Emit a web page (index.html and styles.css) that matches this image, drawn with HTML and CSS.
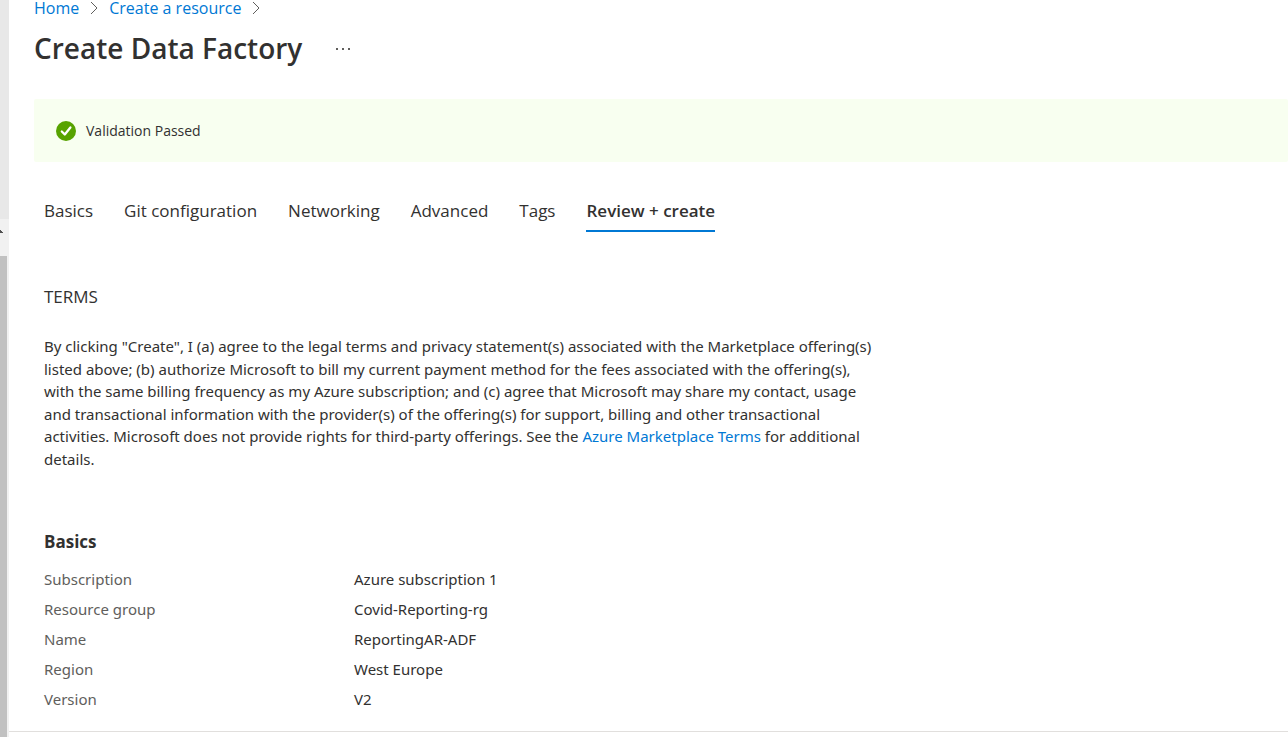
FILE: index.html
```html
<!DOCTYPE html>
<html lang="en">
<head>
<meta charset="utf-8">
<title>Create Data Factory</title>
<link rel="stylesheet" href="styles.css">
</head>
<body>
<div class="shell">
  <aside class="rail" aria-hidden="true">
    <div class="rail-head"></div>
    <div class="rail-arrow"><svg width="3" height="3" viewBox="0 0 3 3"><path d="M0 0h1v1h1v1h1v1H0z" fill="#505050" shape-rendering="crispEdges"/></svg></div>
    <div class="rail-thumb"></div>
  </aside>
  <div class="blade">
    <header class="blade-header">
      <nav class="crumbs" aria-label="Breadcrumb">
        <a href="#">Home</a>
        <svg class="chevron" viewBox="0 0 8 14"><path d="M1 1l6 6-6 6"/></svg>
        <a href="#">Create a resource</a>
        <svg class="chevron" viewBox="0 0 8 14"><path d="M1 1l6 6-6 6"/></svg>
      </nav>
      <div class="title-row">
        <h1>Create Data Factory</h1>
        <button class="more" type="button" aria-label="More actions"><svg width="14" height="2" viewBox="0 0 14 2"><path d="M0 0h2v2H0zM6 0h2v2H6zM12 0h2v2h-2z"/></svg></button>
      </div>
    </header>
    <div class="banner" role="status">
      <svg class="check" viewBox="0 0 20 20"><circle cx="10" cy="10" r="10" fill="#57a300"/><path d="M5.8 10.5l3 3 5.6-7" fill="none" stroke="#fff" stroke-width="2.3" stroke-linecap="round" stroke-linejoin="round"/></svg>
      <span>Validation Passed</span>
    </div>
    <main class="content">
      <div class="tabs" role="tablist">
        <button class="tab" type="button" role="tab">Basics</button>
        <button class="tab" type="button" role="tab">Git configuration</button>
        <button class="tab" type="button" role="tab">Networking</button>
        <button class="tab" type="button" role="tab">Advanced</button>
        <button class="tab" type="button" role="tab">Tags</button>
        <button class="tab active" type="button" role="tab" aria-selected="true">Review + create</button>
      </div>
      <h2 class="terms-title">TERMS</h2>
      <p class="terms">By clicking "Create", I (a) agree to the legal terms and privacy statement(s) associated with the Marketplace offering(s)<br>listed above; (b) authorize Microsoft to bill my current payment method for the fees associated with the offering(s),<br>with the same billing frequency as my Azure subscription; and (c) agree that Microsoft may share my contact, usage<br>and transactional information with the provider(s) of the offering(s) for support, billing and other transactional<br>activities. Microsoft does not provide rights for third-party offerings. See the <a href="#">Azure Marketplace Terms</a> for additional<br>details.</p>
      <h2 class="section-title">Basics</h2>
      <dl class="summary">
        <dt>Subscription</dt><dd>Azure subscription 1</dd>
        <dt>Resource group</dt><dd>Covid-Reporting-rg</dd>
        <dt>Name</dt><dd>ReportingAR-ADF</dd>
        <dt>Region</dt><dd>West Europe</dd>
        <dt>Version</dt><dd>V2</dd>
      </dl>
    </main>
    <footer class="blade-footer"></footer>
  </div>
</div>
</body>
</html>
```
FILE: styles.css
```css
* { box-sizing: border-box; }
body {
  margin: 0;
  background: #fff;
  color: #323130;
  font-family: "Segoe UI", "Open Sans", "Noto Sans", sans-serif;
  font-size: 15px;
}
a { color: #0078d4; text-decoration: none; }
button { border: 0; background: none; padding: 0; color: inherit; font: inherit; }
h1, h2, p, dl, dd { margin: 0; }
.shell { display: flex; min-height: 100vh; }
.rail { flex: none; width: 9px; display: flex; flex-direction: column; background: #f1f1f1; }
.rail-head { height: 219px; background: #e8e8e8; }
.rail-arrow { height: 37px; padding-top: 11px; line-height: 0; }
.rail-arrow svg { display: block; }
.rail-thumb { flex: 1; width: 7px; background: #c1c1c1; }
.blade { flex: 1; min-width: 0; display: flex; flex-direction: column; }
.blade-header { padding-left: 25px; }
.crumbs { display: flex; align-items: center; gap: 11px; font-size: 16px; line-height: 16px; }
.chevron { width: 8px; height: 14px; fill: none; stroke: #605e5c; stroke-width: 1; }
.title-row { display: flex; align-items: center; gap: 34px; margin-top: 12px; }
h1 { font-size: 28px; line-height: 40px; font-weight: 600; }
.more { display: flex; padding-top: 2px; }
.more svg { fill: #605e5c; }
.banner {
  display: flex; align-items: center; gap: 10px;
  margin: 31px 0 0 25px; padding: 20px 22px;
  background: #f8fff0; border-radius: 2px;
  font-size: 14px; line-height: 23px;
}
.check { width: 20px; height: 20px; }
.content { padding-left: 35px; }
.tabs { display: flex; gap: 31px; margin-top: 37px; }
.tab { padding-bottom: 7px; border-bottom: 2px solid transparent; font-size: 17px; line-height: 24px; white-space: nowrap; }
.tab.active { border-color: #0078d4; font-weight: 600; }
.terms-title { margin-top: 53px; font-size: 17px; line-height: 24px; font-weight: 400; }
.terms { margin-top: 26px; font-family: "Segoe UI", "Noto Sans", sans-serif; line-height: 1.5; }
.section-title { margin-top: 60px; font-size: 17px; line-height: 24px; font-weight: 700; }
.summary { display: grid; grid-template-columns: 310px 1fr; margin-top: 10px; font-family: "Segoe UI", "Noto Sans", sans-serif; line-height: 30px; }
.summary dt { color: #605e5c; }
.blade-footer { margin-top: 17px; border-top: 1px solid #e1dfdd; }
```
